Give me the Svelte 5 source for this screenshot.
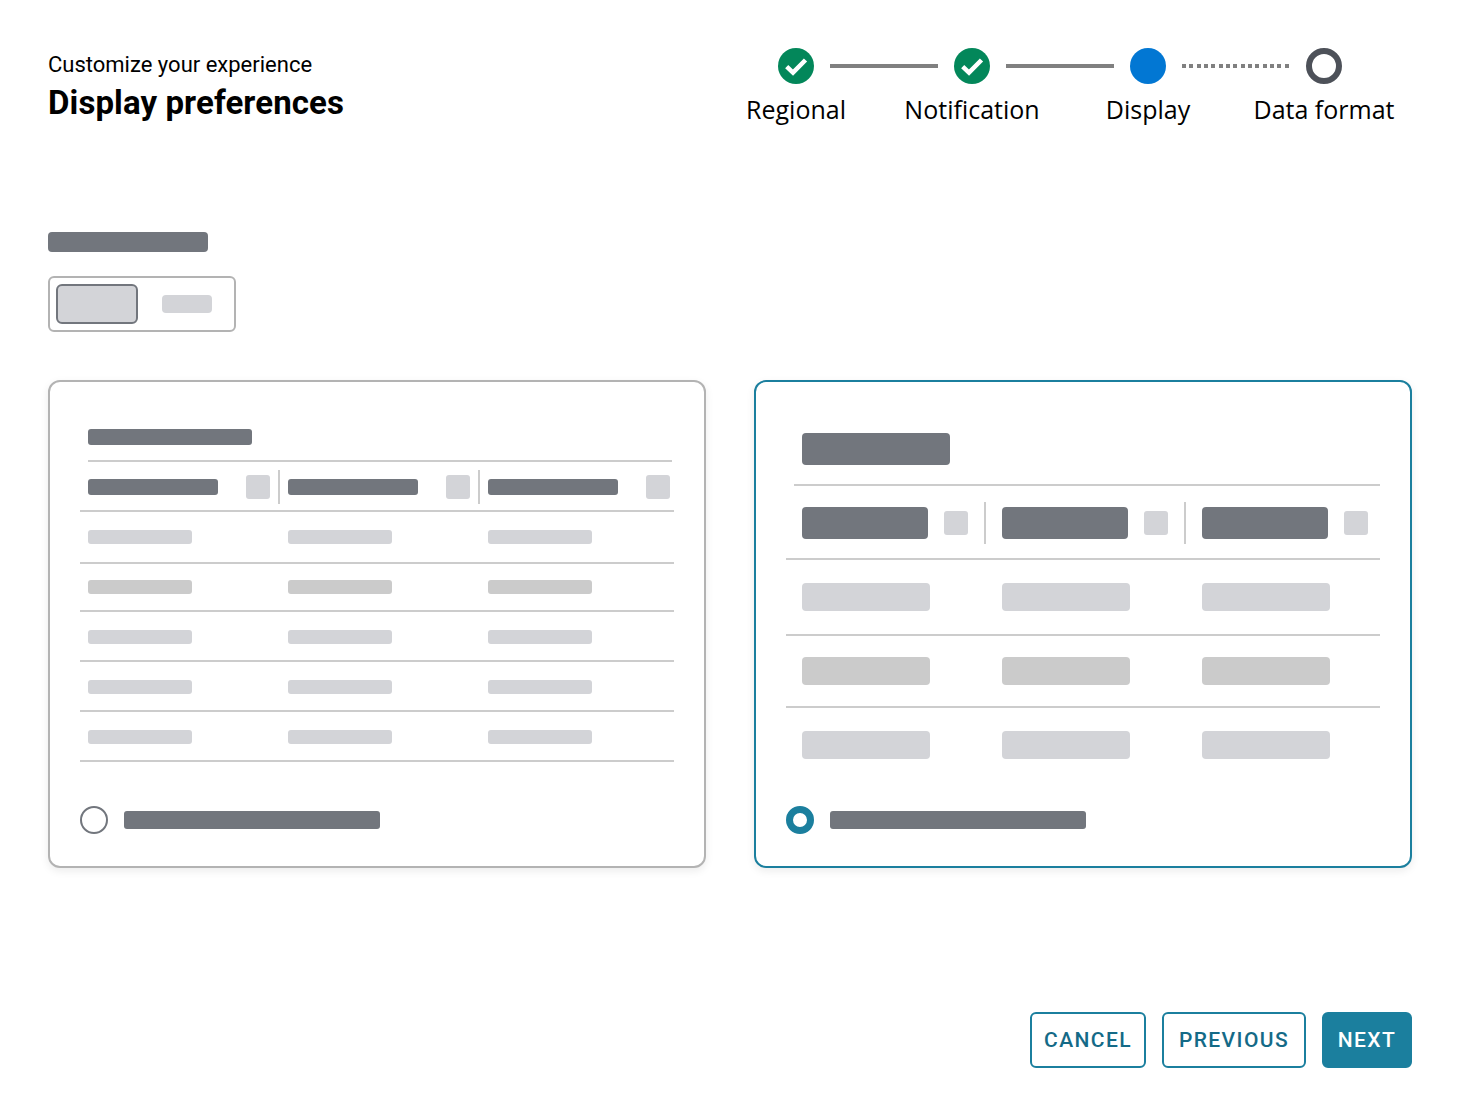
<script lang="ts">
	const steps = ['Regional', 'Notification', 'Display', 'Data format'];
	const columns = [0, 1, 2];
	const rows = [0, 1, 2, 3, 4];
	const wideRows = [0, 1, 2];
</script>

<div class="page">
	<header class="top">
		<div class="titles">
			<p class="eyebrow">Customize your experience</p>
			<h1>Display preferences</h1>
		</div>
		<div class="stepper">
			<div class="track">
				<span class="dot done">
					<svg viewBox="0 0 36 36" width="36" height="36"><path d="M8.7 18.7l6.3 6L27.5 12" /></svg>
				</span>
				<span class="line"></span>
				<span class="dot done">
					<svg viewBox="0 0 36 36" width="36" height="36"><path d="M8.7 18.7l6.3 6L27.5 12" /></svg>
				</span>
				<span class="line"></span>
				<span class="dot current"></span>
				<span class="line dotted"></span>
				<span class="dot todo"></span>
			</div>
			<div class="labels">
				{#each steps as step}
					<span>{step}</span>
				{/each}
			</div>
		</div>
	</header>

	<div class="bar label-bar"></div>
	<div class="toggle">
		<div class="toggle-on"></div>
		<div class="toggle-off"></div>
	</div>

	<div class="cards">
		<section class="card compact">
			<div class="bar card-title"></div>
			<div class="head">
				{#each columns as col}
					<div class="head-cell">
						<div class="bar head-bar"></div>
						<div class="sort"></div>
					</div>
				{/each}
			</div>
			{#each rows as row}
				<div class="row">
					{#each columns as col}
						<div class="cell"></div>
					{/each}
				</div>
			{/each}
			<div class="choice">
				<span class="radio"></span>
				<div class="bar choice-bar"></div>
			</div>
		</section>

		<section class="card comfy">
			<div class="bar card-title"></div>
			<div class="head">
				{#each columns as col}
					<div class="head-cell">
						<div class="bar head-bar"></div>
						<div class="sort"></div>
					</div>
				{/each}
			</div>
			{#each wideRows as row}
				<div class="row">
					{#each columns as col}
						<div class="cell"></div>
					{/each}
				</div>
			{/each}
			<div class="choice">
				<span class="radio"></span>
				<div class="bar choice-bar"></div>
			</div>
		</section>
	</div>

	<footer class="actions">
		<button class="btn cancel">CANCEL</button>
		<button class="btn previous">PREVIOUS</button>
		<button class="btn next">NEXT</button>
	</footer>
</div>

<style>
	:global(body) {
		margin: 0;
		background: #fff;
	}

	.page {
		width: 1460px;
		height: 1116px;
		box-sizing: border-box;
		padding: 48px 48px 0;
		font-family: 'Open Sans', sans-serif;
		color: #000;
	}

	.top {
		display: flex;
		justify-content: space-between;
		height: 184px;
	}

	.eyebrow {
		margin: 1px 0 0;
		font-family: 'Roboto', sans-serif;
		font-size: 22px;
		line-height: 32px;
	}

	h1 {
		margin: 2px 0 0;
		font-family: 'Roboto', sans-serif;
		font-size: 33px;
		line-height: 40px;
		font-weight: 700;
		letter-spacing: 0.1px;
	}

	.stepper {
		width: 704px;
	}

	.track {
		display: flex;
		align-items: center;
		gap: 16px;
		margin-left: 70px;
	}

	.dot {
		width: 36px;
		height: 36px;
		box-sizing: border-box;
		border-radius: 50%;
		flex: none;
	}

	.dot svg {
		display: block;
		fill: none;
		stroke: #fff;
		stroke-width: 4.5;
	}

	.done {
		background: #03875a;
	}

	.current {
		background: #0277d3;
	}

	.todo {
		border: 6px solid #4d5159;
	}

	.line {
		width: 108px;
		height: 4px;
		background: #808080;
	}

	.line.dotted {
		background: repeating-linear-gradient(90deg, #808080 0 4px, transparent 4px 7.33px);
	}

	.labels {
		display: grid;
		grid-template-columns: repeat(4, 176px);
		margin-top: 7px;
		text-align: center;
		font-size: 25px;
		line-height: 36px;
	}

	.bar {
		background: #72767d;
		border-radius: 3px;
	}

	.label-bar {
		width: 160px;
		height: 20px;
		border-radius: 4px;
	}

	.toggle {
		display: flex;
		align-items: center;
		gap: 24px;
		width: 188px;
		height: 56px;
		box-sizing: border-box;
		margin-top: 24px;
		padding: 0 6px;
		border: 2px solid #b3b3b3;
		border-radius: 6px;
	}

	.toggle-on {
		width: 82px;
		height: 40px;
		box-sizing: border-box;
		background: #d3d4d8;
		border: 2px solid #72767d;
		border-radius: 6px;
	}

	.toggle-off {
		width: 50px;
		height: 18px;
		background: #d3d4d8;
		border-radius: 4px;
	}

	.cards {
		display: grid;
		grid-template-columns: 658px 658px;
		gap: 48px;
		margin-top: 48px;
	}

	.card {
		height: 488px;
		box-sizing: border-box;
		padding: 0 30px;
		border: 2px solid #b3b3b3;
		border-radius: 12px;
		background: #fff;
		box-shadow: 0 3px 8px rgba(0, 0, 0, 0.08);
	}

	.comfy {
		border-color: #1b7f9e;
	}

	.head {
		display: grid;
		grid-template-columns: repeat(3, 200px);
		border-top: 2px solid #ccc;
	}

	.head-cell {
		display: flex;
		align-items: center;
		box-sizing: border-box;
		width: 192px;
		border-right: 2px solid #ccc;
	}

	.head-cell:last-child {
		border-right: 0;
	}

	.row {
		display: grid;
		grid-template-columns: repeat(3, 200px);
		border-bottom: 2px solid #ccc;
	}

	.row:nth-of-type(3) {
		border-top: 2px solid #ccc;
	}

	.cell {
		background: #d3d4d8;
		border-radius: 3px;
	}

	.row:nth-of-type(4) .cell {
		background: #cbcbcb;
	}

	.sort {
		width: 24px;
		height: 24px;
		background: #d3d4d8;
		border-radius: 3px;
	}

	.choice {
		display: flex;
		align-items: center;
		gap: 16px;
	}

	.radio {
		width: 28px;
		height: 28px;
		box-sizing: border-box;
		border-radius: 50%;
		border: 2px solid #72767d;
	}

	.choice-bar {
		width: 256px;
		height: 18px;
	}

	/* compact variant */
	.compact .card-title {
		width: 164px;
		height: 16px;
		margin: 47px 0 15px 8px;
	}

	.compact .head {
		margin: 0 2px 0 8px;
		height: 50px;
		box-sizing: border-box;
	}

	.compact .head-cell {
		margin: 8px 0 6px;
	}

	.compact .head-bar {
		width: 130px;
		height: 16px;
	}

	.compact .sort {
		margin-left: 28px;
	}

	.compact .row {
		padding: 18px 8px 16px;
	}

	.compact .row:nth-of-type(3) {
		padding-bottom: 18px;
	}

	.compact .row:nth-of-type(4) {
		padding-top: 16px;
	}

	.compact .cell {
		width: 104px;
		height: 14px;
	}

	.compact .choice {
		margin-top: 44px;
	}

	/* comfortable variant */
	.comfy .card-title {
		width: 148px;
		height: 32px;
		margin: 51px 0 19px 16px;
		border-radius: 4px;
	}

	.comfy .head {
		margin-left: 8px;
		height: 74px;
		box-sizing: border-box;
	}

	.comfy .head-cell {
		margin: 16px 0 14px;
	}

	.comfy .head-bar {
		width: 126px;
		height: 32px;
		margin-left: 8px;
		border-radius: 4px;
	}

	.comfy .sort {
		margin-left: 16px;
	}

	.comfy .row {
		padding: 23px 16px;
	}

	.comfy .row:nth-of-type(4) {
		padding: 21px 16px;
	}

	.comfy .row:nth-of-type(5) {
		border-bottom: 0;
	}

	.comfy .cell {
		width: 128px;
		height: 28px;
		border-radius: 4px;
	}

	.comfy .radio {
		border: 7px solid #1b7f9e;
	}

	.comfy .choice {
		margin-top: 24px;
	}

	.actions {
		display: flex;
		justify-content: flex-end;
		gap: 16px;
		margin-top: 144px;
	}

	.btn {
		height: 56px;
		padding: 0;
		background: #fff;
		border: 2px solid #1b7f9e;
		border-radius: 6px;
		color: #146a87;
		font-family: 'Roboto', sans-serif;
		font-size: 21px;
		font-weight: 500;
		letter-spacing: 1.4px;
	}

	.cancel {
		width: 116px;
	}

	.previous {
		width: 144px;
	}

	.next {
		width: 90px;
		background: #1b7f9e;
		color: #fff;
	}
</style>
